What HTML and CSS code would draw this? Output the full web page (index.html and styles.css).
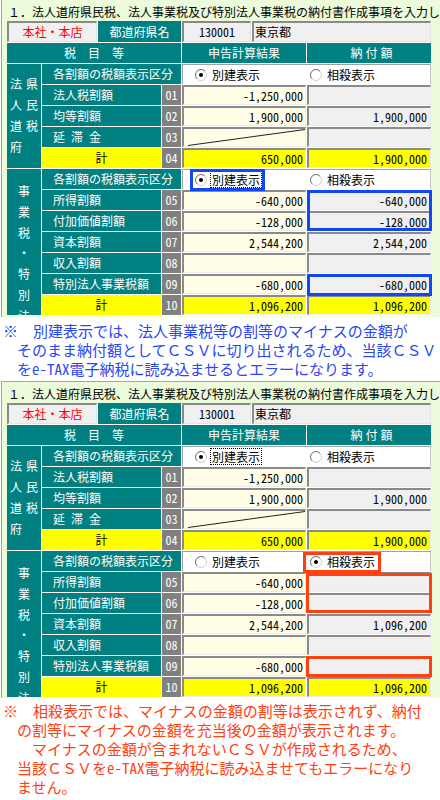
FILE: index.html
```html
<!DOCTYPE html>
<html lang="ja">
<head>
<meta charset="utf-8">
<title>納付書作成事項</title>
<link rel="stylesheet" href="styles.css">
</head>
<body>
<div class="panel">
  <div class="title">１．法人道府県民税、法人事業税及び特別法人事業税の納付書作成事項を入力し</div>
  <div class="sheet">
    <div class="topbar">
      <div class="bx office">本社・本店</div>
      <div class="pref">都道府県名</div>
      <div class="bx code">130001</div>
      <div class="bx pname">東京都</div>
    </div>
    <div class="hd hd-a">税　目　等</div>
    <div class="hd hd-b">申告計算結果</div>
    <div class="hd hd-c">納付額</div>

    <div class="side side1">法県<br>人民<br>道税<br>府</div>
    <div class="lbl wide">各割額の税額表示区分</div>
    <div class="radios">
      <div class="opt opt1"><svg class="rb" viewBox="0 0 12 12"><circle cx="6" cy="6" r="5.5" fill="#fff" stroke="#cfcfcf"/><path d="M2.1 9.9A5.5 5.5 0 0 1 9.9 2.1" fill="none" stroke="#7a7a7a"/><circle cx="6" cy="6" r="2" fill="#000"/></svg><span>別建表示</span></div>
      <div class="opt opt2"><svg class="rb" viewBox="0 0 12 12"><circle cx="6" cy="6" r="5.5" fill="#fff" stroke="#cfcfcf"/><path d="M2.1 9.9A5.5 5.5 0 0 1 9.9 2.1" fill="none" stroke="#7a7a7a"/></svg><span>相殺表示</span></div>
    </div>
    <div class="lbl">法人税割額</div><div class="num">01</div><div class="val c4">-1,250,000</div><div class="val c5"></div>
    <div class="lbl">均等割額</div><div class="num">02</div><div class="val c4">1,900,000</div><div class="val c5">1,900,000</div>
    <div class="lbl">延&ensp;滞&ensp;金</div><div class="num">03</div><div class="val c4 diag"><svg class="dg" viewBox="0 0 120 17" preserveAspectRatio="none"><line x1="4" y1="16.5" x2="120" y2="0.5" stroke="#222" stroke-width="1" vector-effect="non-scaling-stroke"/></svg></div><div class="val c5"></div>
    <div class="sum">計</div><div class="num">04</div><div class="val c4 yel">650,000</div><div class="val c5 yel">1,900,000</div>

    <div class="side side2">事<br>業<br>税<br>・<br>特<br>別<br>法</div>
    <div class="lbl wide">各割額の税額表示区分</div>
    <div class="radios">
      <div class="opt opt1"><svg class="rb" viewBox="0 0 12 12"><circle cx="6" cy="6" r="5.5" fill="#fff" stroke="#cfcfcf"/><path d="M2.1 9.9A5.5 5.5 0 0 1 9.9 2.1" fill="none" stroke="#7a7a7a"/><circle cx="6" cy="6" r="2" fill="#000"/></svg><span class="focus">別建表示</span></div>
      <div class="opt opt2"><svg class="rb" viewBox="0 0 12 12"><circle cx="6" cy="6" r="5.5" fill="#fff" stroke="#cfcfcf"/><path d="M2.1 9.9A5.5 5.5 0 0 1 9.9 2.1" fill="none" stroke="#7a7a7a"/></svg><span>相殺表示</span></div>
    </div>
    <div class="lbl">所得割額</div><div class="num">05</div><div class="val c4">-640,000</div><div class="val c5">-640,000</div>
    <div class="lbl">付加価値割額</div><div class="num">06</div><div class="val c4">-128,000</div><div class="val c5">-128,000</div>
    <div class="lbl">資本割額</div><div class="num">07</div><div class="val c4">2,544,200</div><div class="val c5">2,544,200</div>
    <div class="lbl">収入割額</div><div class="num">08</div><div class="val c4"></div><div class="val c5"></div>
    <div class="lbl">特別法人事業税額</div><div class="num">09</div><div class="val c4">-680,000</div><div class="val c5">-680,000</div>
    <div class="sum">計</div><div class="num">10</div><div class="val c4 yel">1,096,200</div><div class="val c5 yel">1,096,200</div>

    <div class="hl blue b-radio"></div>
    <div class="hl blue b-0506"></div>
    <div class="hl blue b-09"></div>
  </div>
</div>

<div class="note note1">※　別建表示では、法人事業税等の割等のマイナスの金額が<br>そのまま納付額としてＣＳＶに切り出されるため、当該ＣＳＶ<br>を<span class="hw">e-TAX</span>電子納税に読み込ませるとエラーになります。</div>

<div class="panel second">
  <div class="title">１．法人道府県民税、法人事業税及び特別法人事業税の納付書作成事項を入力し</div>
  <div class="sheet">
    <div class="topbar">
      <div class="bx office">本社・本店</div>
      <div class="pref">都道府県名</div>
      <div class="bx code">130001</div>
      <div class="bx pname">東京都</div>
    </div>
    <div class="hd hd-a">税　目　等</div>
    <div class="hd hd-b">申告計算結果</div>
    <div class="hd hd-c">納付額</div>

    <div class="side side1">法県<br>人民<br>道税<br>府</div>
    <div class="lbl wide">各割額の税額表示区分</div>
    <div class="radios">
      <div class="opt opt1"><svg class="rb" viewBox="0 0 12 12"><circle cx="6" cy="6" r="5.5" fill="#fff" stroke="#cfcfcf"/><path d="M2.1 9.9A5.5 5.5 0 0 1 9.9 2.1" fill="none" stroke="#7a7a7a"/><circle cx="6" cy="6" r="2" fill="#000"/></svg><span class="focus">別建表示</span></div>
      <div class="opt opt2"><svg class="rb" viewBox="0 0 12 12"><circle cx="6" cy="6" r="5.5" fill="#fff" stroke="#cfcfcf"/><path d="M2.1 9.9A5.5 5.5 0 0 1 9.9 2.1" fill="none" stroke="#7a7a7a"/></svg><span>相殺表示</span></div>
    </div>
    <div class="lbl">法人税割額</div><div class="num">01</div><div class="val c4">-1,250,000</div><div class="val c5"></div>
    <div class="lbl">均等割額</div><div class="num">02</div><div class="val c4">1,900,000</div><div class="val c5">1,900,000</div>
    <div class="lbl">延&ensp;滞&ensp;金</div><div class="num">03</div><div class="val c4 diag"><svg class="dg" viewBox="0 0 120 17" preserveAspectRatio="none"><line x1="4" y1="16.5" x2="120" y2="0.5" stroke="#222" stroke-width="1" vector-effect="non-scaling-stroke"/></svg></div><div class="val c5"></div>
    <div class="sum">計</div><div class="num">04</div><div class="val c4 yel">650,000</div><div class="val c5 yel">1,900,000</div>

    <div class="side side2">事<br>業<br>税<br>・<br>特<br>別<br>法</div>
    <div class="lbl wide">各割額の税額表示区分</div>
    <div class="radios">
      <div class="opt opt1"><svg class="rb" viewBox="0 0 12 12"><circle cx="6" cy="6" r="5.5" fill="#fff" stroke="#cfcfcf"/><path d="M2.1 9.9A5.5 5.5 0 0 1 9.9 2.1" fill="none" stroke="#7a7a7a"/></svg><span>別建表示</span></div>
      <div class="opt opt2"><svg class="rb" viewBox="0 0 12 12"><circle cx="6" cy="6" r="5.5" fill="#fff" stroke="#cfcfcf"/><path d="M2.1 9.9A5.5 5.5 0 0 1 9.9 2.1" fill="none" stroke="#7a7a7a"/><circle cx="6" cy="6" r="2" fill="#000"/></svg><span>相殺表示</span></div>
    </div>
    <div class="lbl">所得割額</div><div class="num">05</div><div class="val c4">-640,000</div><div class="val c5"></div>
    <div class="lbl">付加価値割額</div><div class="num">06</div><div class="val c4">-128,000</div><div class="val c5"></div>
    <div class="lbl">資本割額</div><div class="num">07</div><div class="val c4">2,544,200</div><div class="val c5">1,096,200</div>
    <div class="lbl">収入割額</div><div class="num">08</div><div class="val c4"></div><div class="val c5"></div>
    <div class="lbl">特別法人事業税額</div><div class="num">09</div><div class="val c4">-680,000</div><div class="val c5"></div>
    <div class="sum">計</div><div class="num">10</div><div class="val c4 yel">1,096,200</div><div class="val c5 yel">1,096,200</div>

    <div class="hl red r-radio"></div>
    <div class="hl red r-0506"></div>
    <div class="hl red r-09"></div>
  </div>
</div>

<div class="note note2">※　相殺表示では、マイナスの金額の割等は表示されず、納付<br>の割等にマイナスの金額を充当後の金額が表示されます。<br>　マイナスの金額が含まれないＣＳＶが作成されるため、<br>当該ＣＳＶを<span class="hw">e-TAX</span>電子納税に読み込ませてもエラーになり<br>ません。</div>
</body>
</html>
```

FILE: styles.css
```css
* { box-sizing: border-box; }
html, body { margin: 0; padding: 0; background: #fff; }
body {
  width: 440px;
  height: 800px;
  overflow: hidden;
  font-family: "Noto Sans CJK JP", "Noto Sans", sans-serif;
  font-size: 12px;
  color: #000;
}

.panel {
  position: relative;
  margin-left: 1px;
  border-left: 1px solid #a4a4a4;
  background: #ecfbda;
  padding-left: 5px;
  height: 317px;
  overflow: hidden;
}
.panel.second { border-top: 1px solid #a4a4a4; }

.title {
  height: 21px;
  line-height: 24px;
  white-space: nowrap;
  padding-left: 1px;
}

.sheet {
  position: relative;
  width: 424px;
  display: grid;
  grid-template-columns: 34px 119px 19px 124px 124px;
  grid-template-rows: 21px 20px repeat(12, 20px);
  gap: 1px;
  background: #fff;
  padding-bottom: 1px;
}

.topbar { grid-column: 1 / -1; display: flex; gap: 1px; }
.bx {
  background: #f0f0f0;
  border-style: solid;
  border-width: 2px 1px 1px 2px;
  border-color: #8a8a8a #e4e4e4 #e4e4e4 #8a8a8a;
  line-height: 18px;
}
.office { width: 90px; color: #f00; text-align: center; }
.pref { width: 83px; background: #008080; color: #fff; text-align: center; line-height: 21px; }
.code { width: 69px; text-align: center; font-feature-settings: "hwid" 1; }
.pname { width: 179px; padding-left: 1px; }

.hd { background: #008080; color: #fff; text-align: center; line-height: 20px; }
.hd-a { grid-column: 1 / 4; }
.hd-b { grid-column: 4; }
.hd-c { grid-column: 5; letter-spacing: 3px; padding-left: 8px; }

.side { grid-column: 1; background: #008080; color: #fff; overflow: hidden; }
.side1 {
  grid-row: 3 / span 5;
  padding: 9px 0 0 3px;
  line-height: 21px;
  letter-spacing: 4px;
  white-space: nowrap;
}
.side2 { grid-row: 8 / span 7; padding-top: 12px; line-height: 20.75px; text-align: center; }

.lbl { grid-column: 2; background: #008080; color: #fff; padding-left: 11px; line-height: 20px; white-space: nowrap; }
.wide { grid-column: 2 / 4; }
.sum { grid-column: 2; background: #ff0; text-align: center; line-height: 20px; }
.num {
  grid-column: 3;
  background: #808080;
  color: #fff;
  text-align: center;
  line-height: 20px;
  font-feature-settings: "hwid" 1;
}

.val {
  border-style: solid;
  border-width: 2px 1px 1px 2px;
  border-color: #8a8a8a #ececec #ececec #8a8a8a;
  text-align: right;
  padding-right: 2px;
  line-height: 17px;
  font-feature-settings: "hwid" 1;
}
.c4 { grid-column: 4; background: #fffde6; }
.c5 { grid-column: 5; background: #f0f0f0; padding-right: 3px; }
.val.yel { background: #ff0; }
.diag { padding-right: 0; }
.dg { display: block; width: 100%; height: 100%; }

.radios {
  grid-column: 4 / 6;
  background: #fff;
  border-top: 1px solid #a0a0a0;
  border-left: 1px solid #a0a0a0;
  border-right: 1px solid #c4c4c4;
  display: grid;
  grid-template-columns: 124px 1fr;
}
.opt { display: flex; align-items: center; gap: 5px; }
.opt1 { padding-left: 12px; }
.opt2 { padding-left: 3px; }
.rb { width: 12px; height: 12px; flex: none; display: block; }
.opt span { display: inline-block; line-height: 15px; padding: 0 1px; margin-left: -1px; }
.opt .focus { outline: 1px dotted #000; outline-offset: 0; }

.hl { position: absolute; border: 3px solid; }
.blue { border-color: #1148f0; }
.red { border-color: #ff4010; }
.b-radio { left: 183px; top: 148px; width: 75px; height: 22px; }
.b-0506 { left: 300px; top: 169px; width: 125px; height: 41px; }
.b-09 { left: 300px; top: 253px; width: 125px; height: 22px; }
.r-radio { left: 296px; top: 149px; width: 78px; height: 21px; }
.r-0506 { left: 299px; top: 170px; width: 126px; height: 40px; }
.r-09 { left: 299px; top: 253px; width: 126px; height: 21px; }

.note {
  white-space: nowrap;
  font-size: 15px;
  padding-left: 17px;
  text-indent: -14px;
}
.hw { font-feature-settings: "hwid" 1; }
.note1 { height: 64px; padding-top: 5px; line-height: 18.75px; color: #2a46f5; }
.note2 { padding-top: 4px; line-height: 18.9px; color: #ff4010; }
```
